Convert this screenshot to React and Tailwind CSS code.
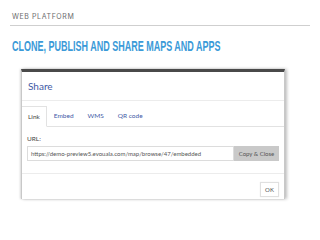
import React from "react";

const tabs = ["Link", "Embed", "WMS", "QR code"];

const App = () => {
  return (
    <div className="w-[320px] h-[240px] bg-white overflow-hidden" style={{ fontFamily: "Lato, 'Open Sans', sans-serif" }}>
      {/* slide header */}
      <div className="px-[10px] pt-[12px]">
        <div className="px-[2px] text-[7px] leading-[9px] tracking-[0.6px] text-[#6b6b6b] font-['Inter',sans-serif]">WEB PLATFORM</div>
        <div className="mt-[4px] h-px bg-[#cfcfcf]" />
        <div className="mt-[7px] px-[2px] h-[15px] whitespace-nowrap">
          <h1 className="inline-block origin-left scale-x-[0.6] text-[15px] leading-[15px] font-bold text-[#3b9ad8] font-['Liberation_Sans',sans-serif]">
            CLONE, PUBLISH AND SHARE MAPS AND APPS
          </h1>
        </div>
      </div>

      {/* share dialog */}
      <div className="ml-[21px] mt-[21px] w-[264px] h-[130px] bg-white border-t-[3px] border-t-[#4a4a4a] border-x border-x-[#c8c8c8] shadow-[2px_0_3px_rgba(0,0,0,0.25),-1px_0_2px_rgba(0,0,0,0.15)]">
        <div className="h-[29px] flex items-center px-[6px] border-b border-[#ececec]">
          <span className="text-[10px] text-[#3f5aa6]">Share</span>
        </div>

        <div className="mt-[6px] flex items-end border-b border-[#e2e2e2] h-[20px]">
          {tabs.map((t, i) => (
            <div
              key={t}
              className={
                i === 0
                  ? "h-[21px] -mb-px px-[5px] flex items-center bg-white border border-[#e2e2e2] border-b-white border-l-0 text-[6.5px] text-[#444]"
                  : "h-[20px] px-[7px] flex items-center text-[6.5px] text-[#3f5aa6]"
              }
            >
              <span className={i === 0 ? "pl-[1px] pr-[1px]" : ""}>{t}</span>
            </div>
          ))}
        </div>

        <div className="px-[5px] pt-[8px]">
          <div className="text-[6.5px] leading-[8px] text-[#444]">URL:</div>
          <div className="mt-[3px] flex h-[15px]">
            <div className="flex-1 flex items-center px-[3px] border border-[#dcdcdc] text-[6px] text-[#555] whitespace-nowrap overflow-hidden">
              https://demo-preview5.evouala.com/map/browse/47/embedded
            </div>
            <div className="w-[45px] flex items-center justify-center bg-[#c9c9c9] text-[6px] text-[#555]">Copy &amp; Close</div>
          </div>
        </div>

        <div className="mt-[12px] border-t border-[#ececec]" />
        <div className="flex justify-end px-[5px] pt-[8px]">
          <div className="w-[19px] h-[15px] flex items-center justify-center border border-[#e0e0e0] text-[6px] text-[#555] shadow-[0_0_1px_rgba(0,0,0,0.1)]">OK</div>
        </div>
      </div>
    </div>
  );
};

export default App;
